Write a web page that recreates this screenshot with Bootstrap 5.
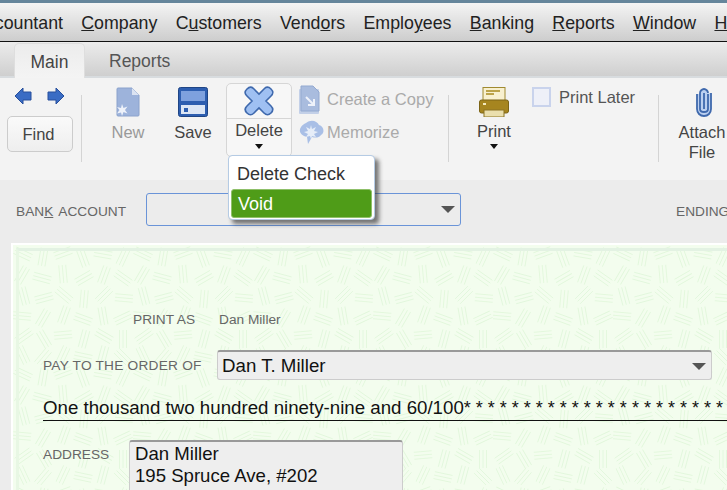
<!DOCTYPE html>
<html lang="en">
<head>
<meta charset="utf-8">
<title>Write Check</title>
<link href="https://cdn.jsdelivr.net/npm/bootstrap@5.3.0/dist/css/bootstrap.min.css" rel="stylesheet">
<style>
html,body{height:490px;overflow:hidden;}
body{font-family:"Liberation Sans",Arial,sans-serif;background:#ececec;color:#333;width:727px;}
.app-top{height:3px;background:#65859b;}
.app-menu{height:39px;background:linear-gradient(#f4f4f4,#cdcdcd);border-bottom:1px solid #111;gap:18.3px;font-size:17.8px;color:#222;white-space:nowrap;padding-top:3px;overflow:hidden;}
.app-menu span:first-child{margin-left:-26px;}
.app-tabs{height:36px;background:linear-gradient(#ececec,#cfcfcf);border-bottom:2px solid #d8dcdf;padding-left:14px;font-size:17.5px;}
.app-tab{width:71px;height:35px;line-height:36px;text-align:center;color:#555;margin-top:1px;}
.app-tab-on{background:linear-gradient(#ececec,#f4f4f4);border:1px solid #dedede;border-bottom:0;border-radius:5px 5px 0 0;color:#444;}
.app-tab-off{width:auto;margin-left:24px;}
.app-bar{height:102px;background:#f3f3f3;position:relative;font-size:16.5px;color:#444;}
.app-nav{width:81px;padding:9px 0 0 7px;flex:none;}
.app-arrows{gap:15px;padding-left:7px;height:29px;}
.app-find{width:66px;height:36px;padding:0 3px 0 0;font-size:16.5px;color:#444;background:linear-gradient(#fafafa,#eee);border:1px solid #ccc;border-radius:5px;}
.app-div{width:1px;height:67px;background:#d4d4d4;margin-top:17px;flex:none;}
.app-tool{flex:none;text-align:center;padding-top:9px;line-height:20px;}
.app-tool svg{display:block;margin:0 auto 5px;}
.app-new{width:38px;margin-left:27px;color:#999;}
.app-save{width:40px;margin-left:26px;}
.app-del{width:66px;height:74px;margin:5px 0 0 13px;border:1px solid #d6d6d6;border-radius:5px;background:#f7f7f7;text-align:center;flex:none;}
.app-del-top{height:35px;padding-top:2px;border-bottom:1px solid #d6d6d6;}
.app-del-low{line-height:20px;padding-top:1px;}
.app-caret{width:0;height:0;border:4px solid transparent;border-top:5px solid #111;border-bottom:0;margin:4px auto 0;}
.app-side{margin-left:6px;width:150px;color:#aaa;padding-top:5px;flex:none;}
.app-side-row{height:33px;gap:6px;}
.app-side-tight{gap:1px;}
.app-print{width:60px;margin-left:15px;padding-top:9px;text-align:center;line-height:20px;flex:none;}
.app-print svg{display:block;margin:0 auto 4px;}
.app-print .app-caret{margin-top:3px;}
.app-later{margin-left:8px;width:126px;padding-top:9px;gap:8px;height:29px;color:#555;flex:none;}
.app-box{width:19px;height:20px;background:#eef0f8;border:2px solid #c9d3ec;flex:none;}
.app-attach{margin-left:15px;width:56px;padding-top:9px;text-align:center;line-height:20px;white-space:nowrap;flex:none;}
.app-attach svg{display:block;margin:0 0 5px 20px;}
.app-menu-pop{display:block;position:absolute;left:228px;top:77px;width:147px;height:65px;min-width:0;padding:2px;margin:0;border:1px solid #b5cbe4;border-radius:4px;box-shadow:4px 4px 4px rgba(50,50,50,.65);font-size:18px;z-index:5;}
.app-menu-pop .dropdown-item{padding:0 6px;height:29px;line-height:29px;color:#333;border-radius:3px;}
.app-menu-pop .dropdown-item.first{height:31px;line-height:32px;}
.app-menu-pop .dropdown-item.active{background:#4f9c18;border:1px solid #8fc06a;color:#fff;line-height:28px;}
.app-bank{height:63px;padding:13px 0 0 16px;font-size:13.7px;color:#666;white-space:nowrap;overflow:hidden;}
.app-bank-lab{width:130px;line-height:38px;word-spacing:2px;flex:none;}
.app-sel{position:relative;background:#ececec;}
.app-sel-arrow{width:0;height:0;border:7px solid transparent;border-top:7px solid #555;border-bottom:0;flex:none;}
.app-bank-sel{width:315px;height:33px;border:1px solid #6a94d8;border-radius:3px;padding:0 5px 0 0;flex:none;}
.app-end{margin-left:215px;line-height:38px;flex:none;}
.app-check{margin-left:11px;height:247px;border:2px solid #fff;border-right:0;border-bottom:0;padding:3px 0 0 3px;background-color:#f3fdee;
background-image:url("data:image/svg+xml,%3Csvg xmlns='http://www.w3.org/2000/svg' xmlns:xlink='http://www.w3.org/1999/xlink' width='120' height='120'%3E%3Cdefs%3E%3Cpath id='a' d='M-9-3.500H9M-9 0H9M-9 3.500H9' stroke='%23e2f7dc' stroke-width='.9' fill='none'/%3E%3C/defs%3E%3Cuse xlink:href='%23a' transform='translate(10 9) rotate(25)'/%3E%3Cuse xlink:href='%23a' transform='translate(30 12) rotate(100)'/%3E%3Cuse xlink:href='%23a' transform='translate(50 8) rotate(-20)'/%3E%3Cuse xlink:href='%23a' transform='translate(70 13) rotate(70)'/%3E%3Cuse xlink:href='%23a' transform='translate(90 9) rotate(10)'/%3E%3Cuse xlink:href='%23a' transform='translate(110 12) rotate(-65)'/%3E%3Cuse xlink:href='%23a' transform='translate(9 30) rotate(-60)'/%3E%3Cuse xlink:href='%23a' transform='translate(29 33) rotate(15)'/%3E%3Cuse xlink:href='%23a' transform='translate(50 29) rotate(85)'/%3E%3Cuse xlink:href='%23a' transform='translate(71 33) rotate(-30)'/%3E%3Cuse xlink:href='%23a' transform='translate(91 30) rotate(110)'/%3E%3Cuse xlink:href='%23a' transform='translate(110 33) rotate(35)'/%3E%3Cuse xlink:href='%23a' transform='translate(11 51) rotate(75)'/%3E%3Cuse xlink:href='%23a' transform='translate(31 53) rotate(-15)'/%3E%3Cuse xlink:href='%23a' transform='translate(51 50) rotate(40)'/%3E%3Cuse xlink:href='%23a' transform='translate(71 54) rotate(95)'/%3E%3Cuse xlink:href='%23a' transform='translate(91 50) rotate(-45)'/%3E%3Cuse xlink:href='%23a' transform='translate(111 53) rotate(5)'/%3E%3Cuse xlink:href='%23a' transform='translate(9 71) rotate(5)'/%3E%3Cuse xlink:href='%23a' transform='translate(30 73) rotate(120)'/%3E%3Cuse xlink:href='%23a' transform='translate(51 70) rotate(-70)'/%3E%3Cuse xlink:href='%23a' transform='translate(70 74) rotate(20)'/%3E%3Cuse xlink:href='%23a' transform='translate(90 71) rotate(80)'/%3E%3Cuse xlink:href='%23a' transform='translate(110 73) rotate(-25)'/%3E%3Cuse xlink:href='%23a' transform='translate(11 91) rotate(-35)'/%3E%3Cuse xlink:href='%23a' transform='translate(31 94) rotate(60)'/%3E%3Cuse xlink:href='%23a' transform='translate(50 90) rotate(-5)'/%3E%3Cuse xlink:href='%23a' transform='translate(71 94) rotate(105)'/%3E%3Cuse xlink:href='%23a' transform='translate(91 91) rotate(30)'/%3E%3Cuse xlink:href='%23a' transform='translate(110 94) rotate(90)'/%3E%3Cuse xlink:href='%23a' transform='translate(10 110) rotate(65)'/%3E%3Cuse xlink:href='%23a' transform='translate(30 112) rotate(-50)'/%3E%3Cuse xlink:href='%23a' transform='translate(50 110) rotate(115)'/%3E%3Cuse xlink:href='%23a' transform='translate(70 112) rotate(12)'/%3E%3Cuse xlink:href='%23a' transform='translate(90 110) rotate(-75)'/%3E%3Cuse xlink:href='%23a' transform='translate(110 112) rotate(45)'/%3E%3C/svg%3E");}
.app-check-in{border-top:3px solid #e3f2e3;border-left:3px solid #e8f7e4;height:100%;padding:59px 0 0 24px;overflow:hidden;}
.app-printas{font-size:13.7px;color:#666;height:39px;padding-left:90px;line-height:20px;}
.app-printas span:first-child{width:86px;}
.app-pay{height:32px;align-items:center;}
.app-pay-lab{width:174px;font-size:13.7px;color:#666;white-space:nowrap;flex:none;letter-spacing:.22px;padding-top:3px;}
.app-pay-sel{width:495px;height:30px;background:#eee;border:1px solid #ccc;border-top:2px solid #999;border-radius:3px;padding:1px 5px 0 4px;font-size:18.7px;color:#111;flex:none;}
.app-words{margin-top:6px;height:34px;line-height:41px;border-bottom:1px solid #111;font-size:18.7px;color:#111;white-space:nowrap;overflow:hidden;}
.app-stars{font-size:18px;}
.app-addr{margin-top:19px;}
.app-addr-lab{width:86px;font-size:13.7px;color:#666;line-height:30px;flex:none;}
.app-addr-box{width:274px;height:50px;background:#eee;border:1px solid #ccc;border-top:2px solid #999;border-bottom:0;border-radius:3px 3px 0 0;padding:1px 0 0 5px;font-size:18.6px;line-height:22px;color:#111;flex:none;overflow:hidden;}
</style>
</head>
<body>
<div class="app-top"></div>
<div class="app-menu d-flex align-items-center">
<span>Accountant</span><span><u>C</u>ompany</span><span>C<u>u</u>stomers</span><span>Vend<u>o</u>rs</span><span>Emplo<u>y</u>ees</span><span><u>B</u>anking</span><span><u>R</u>eports</span><span><u>W</u>indow</span><span><u>H</u>elp</span>
</div>
<div class="app-tabs d-flex">
<div class="app-tab app-tab-on">Main</div>
<div class="app-tab app-tab-off">Reports</div>
</div>
<div class="app-bar d-flex">
<div class="app-nav">
<div class="app-arrows d-flex">
<svg width="18" height="18" viewBox="0 0 18 18"><path d="M1 9 9 1v4h8v8H9v4z" fill="#3a6cc4" stroke="#274f9c"/></svg>
<svg width="18" height="18" viewBox="0 0 18 18"><path d="M17 9 9 1v4H1v8h8v4z" fill="#3a6cc4" stroke="#274f9c"/></svg>
</div>
<button class="btn app-find" type="button">Find</button>
</div>
<div class="app-div"></div>
<div class="app-tool app-new">
<svg width="24" height="30" viewBox="0 0 24 30"><path d="M1 2q0-1 1-1h14l7 7v20q0 1-1 1H2q-1 0-1-1z" fill="#9db3db" stroke="#8ba2cc"/><path d="M16 1l7 7h-7z" fill="#dbe3f2"/><path d="M6 17l1.500 4 4-1.500-2.500 3.500 2.500 3.500-4-1.500L6 29l-1-3.500-4 1 2.500-3.500L1 20l4 1z" fill="#eef2fa"/></svg>
New
</div>
<div class="app-tool app-save">
<svg width="30" height="30" viewBox="0 0 30 30"><rect x=".5" y=".5" width="29" height="29" rx="2" fill="#2d5eb0" stroke="#1f4585"/><rect x="3" y="4" width="24" height="10" fill="#7ea1de"/><rect x="3" y="18" width="24" height="9" fill="#dce6f5"/><rect x="6" y="21" width="4" height="4" fill="#2d5eb0"/></svg>
Save
</div>
<div class="app-del">
<div class="app-del-top"><svg width="30" height="30" viewBox="0 0 30 30"><path d="M3 3c3-3 5-2 7 0l5 5 5-5c2-2 4-3 7 0s2 5 0 7l-5 5 5 5c2 2 3 4 0 7s-5 2-7 0l-5-5-5 5c-2 2-4 3-7 0s-2-5 0-7l5-5-5-5C1 8 0 6 3 3z" fill="#9fc0f2" stroke="#3f69ad" stroke-width="1.6"/></svg></div>
<div class="app-del-low">Delete<div class="app-caret"></div></div>
</div>
<div class="app-side">
<div class="app-side-row d-flex align-items-center"><svg width="23" height="30" viewBox="0 0 23 30"><rect x="1" y="4" width="20" height="25" rx="1" fill="#c3d0e8"/><path d="M3 1h12l6 6v19H3z" fill="#a9bcde" stroke="#93a9d0"/><path d="M8 12l8 8M16 14v6h-6" stroke="#eef2fa" stroke-width="2" fill="none"/></svg>Create a Copy</div>
<div class="app-side-row app-side-tight d-flex align-items-center"><svg width="28" height="26" viewBox="0 0 28 26"><path d="M8 3c5-4 11-2 13 2 5 1 6 8 2 10-2 3-6 3-9 2l-4 7-1-7C3 16 0 11 3 7c1-2 3-3 5-4z" fill="#a9bfe6"/><path d="M13 5l1 4 4-2-2 4 4 1-4 2 2 3-4-1-1 3-1-3-4 1 2-3-4-2 4-1-2-4 4 2z" fill="#e6edf8"/></svg><span>Memorize</span></div>
</div>
<div class="app-div"></div>
<div class="app-print">
<svg width="30" height="30" viewBox="0 0 30 30"><rect x="4" y="0.500" width="22" height="14" fill="#f8f0cf" stroke="#a08a30"/><path d="M7 4h14M7 7h8" stroke="#a8891f" stroke-width="1.500"/><rect x=".5" y="13" width="29" height="13" rx="2" fill="#a6851f" stroke="#7c6416"/><rect x="5" y="23" width="20" height="7" fill="#eadfae" stroke="#8c7424"/><rect x="4" y="16" width="3" height="2" fill="#f3e9bd"/></svg>
Print
<div class="app-caret"></div>
</div>
<div class="app-later d-flex align-items-center"><div class="app-box"></div><span>Print Later</span></div>
<div class="app-div"></div>
<div class="app-attach">
<svg width="20" height="30" viewBox="0 0 20 30"><path d="M14 7v15c0 2-2 3-4 3s-4-1-4-3V6c0-2 2-4 4-4s4 2 4 4v0M17 6v16c0 4-3 7-7 7s-7-3-7-7V7" fill="#bcd0f0" stroke="#3f69ad" stroke-width="1.800"/><path d="M10 6v16" stroke="#3f69ad" stroke-width="1.800"/></svg>
Attach<br>File
</div>
<div class="dropdown-menu app-menu-pop">
<a class="dropdown-item first" href="#">Delete Check</a>
<a class="dropdown-item active" href="#">Void</a>
</div>
</div>
<div class="app-bank d-flex">
<div class="app-bank-lab">BAN<u>K</u> ACCOUNT</div>
<div class="app-sel app-bank-sel d-flex align-items-center justify-content-end"><div class="app-sel-arrow"></div></div>
<div class="app-end">ENDING</div>
</div>
<div class="app-check">
<div class="app-check-in">
<div class="app-printas d-flex"><span>PRINT AS</span><span>Dan Miller</span></div>
<div class="app-pay d-flex">
<div class="app-pay-lab">PAY TO THE ORDER OF</div>
<div class="app-sel app-pay-sel d-flex align-items-center justify-content-between"><span>Dan T. Miller</span><div class="app-sel-arrow"></div></div>
</div>
<div class="app-words">One thousand two hundred ninety-nine and 60/100<span class="app-stars">* * * * * * * * * * * * * * * * * * * * * *</span></div>
<div class="app-addr d-flex">
<div class="app-addr-lab">ADDRESS</div>
<div class="app-addr-box">Dan Miller<br>195 Spruce Ave, #202</div>
</div>
</div>
</div>
<script src="https://cdn.jsdelivr.net/npm/bootstrap@5.3.0/dist/js/bootstrap.bundle.min.js"></script>
</body>
</html>
